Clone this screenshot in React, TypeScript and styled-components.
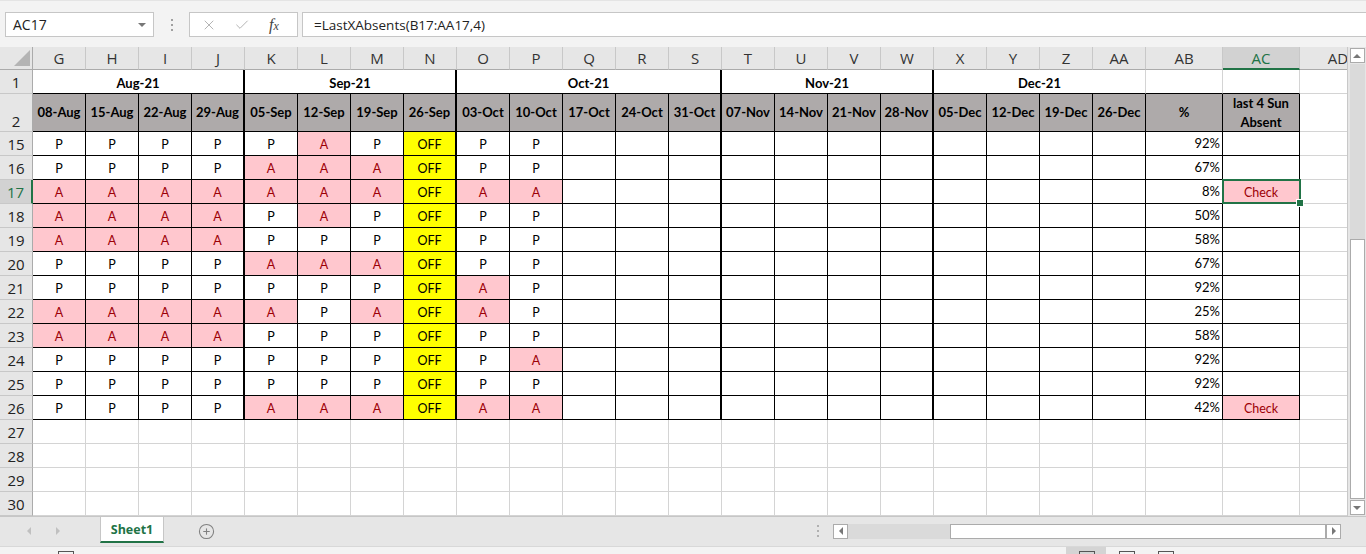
import React from "react";
import styled, { createGlobalStyle } from "styled-components";
import { X, Check, CirclePlus } from "lucide-react";

const GlobalStyle = createGlobalStyle`
  html, body {
    margin: 0;
    padding: 0;
    background: #ffffff;
  }
  body {
    width: 1366px;
    height: 554px;
    overflow: hidden;
  }
`;

const UI_FONT = `"Open Sans", "Noto Sans", Arial, sans-serif`;
const CELL_FONT = `Lato, "Liberation Sans", Arial, sans-serif`;

const GRID = "#d4d4d4";
const INK = "#000000";
const GREEN = "#217346";
const PINK = "#ffc7ce";
const DARK_RED = "#9c0006";
const HEAD_GREY = "#aeaaaa";

const COLS = [
  "G", "H", "I", "J", "K", "L", "M", "N", "O", "P", "Q", "R", "S",
  "T", "U", "V", "W", "X", "Y", "Z", "AA", "AB", "AC", "AD",
];
const WIDTHS = COLS.map((_, i) => (i >= 21 ? 77 : 53));
const THICK = new Set([3, 7, 12, 16]);

const MONTHS = [
  { label: "Aug-21", span: 4, thick: true },
  { label: "Sep-21", span: 4, thick: true },
  { label: "Oct-21", span: 5, thick: true },
  { label: "Nov-21", span: 4, thick: true },
  { label: "Dec-21", span: 4, thick: false },
];

const DATES = [
  "08-Aug", "15-Aug", "22-Aug", "29-Aug",
  "05-Sep", "12-Sep", "19-Sep", "26-Sep",
  "03-Oct", "10-Oct", "17-Oct", "24-Oct", "31-Oct",
  "07-Nov", "14-Nov", "21-Nov", "28-Nov",
  "05-Dec", "12-Dec", "19-Dec", "26-Dec",
];

// O = OFF
const ROWS = [
  { n: 15, v: "PPPPPAPOPP", pct: "92%", check: false },
  { n: 16, v: "PPPPAAAOPP", pct: "67%", check: false },
  { n: 17, v: "AAAAAAAOAA", pct: "8%", check: true },
  { n: 18, v: "AAAAPAPOPP", pct: "50%", check: false },
  { n: 19, v: "AAAAPPPOPP", pct: "58%", check: false },
  { n: 20, v: "PPPPAAAOPP", pct: "67%", check: false },
  { n: 21, v: "PPPPPPPOAP", pct: "92%", check: false },
  { n: 22, v: "AAAAAPAOAP", pct: "25%", check: false },
  { n: 23, v: "AAAAPPPOPP", pct: "58%", check: false },
  { n: 24, v: "PPPPPPPOPA", pct: "92%", check: false },
  { n: 25, v: "PPPPPPPOPP", pct: "92%", check: false },
  { n: 26, v: "PPPPAAAOAA", pct: "42%", check: true },
];

const Page = styled.div`
  width: 1366px;
  height: 554px;
  overflow: hidden;
  display: flex;
  flex-direction: column;
  background: #f3f3f3;
  font-family: ${UI_FONT};
`;

const TopBar = styled.div`
  height: 47px;
  box-sizing: border-box;
  padding: 11px 0 0 5px;
  display: flex;
  align-items: flex-start;
  background: #f3f3f3;
  border-top: 1px solid #e4e4e4;
`;

const NameBox = styled.div`
  width: 149px;
  height: 25px;
  box-sizing: border-box;
  background: #fff;
  border: 1px solid #c6c6c6;
  display: flex;
  align-items: center;
  justify-content: space-between;
  padding: 0 7px 0 7px;
  font-size: 14px;
  color: #222;
`;

const Caret = styled.span`
  width: 0;
  height: 0;
  border-left: 4px solid transparent;
  border-right: 4px solid transparent;
  border-top: 4px solid #777;
`;

const Dots = styled.div`
  width: 35px;
  height: 25px;
  display: flex;
  flex-direction: column;
  align-items: center;
  justify-content: center;
  gap: 3px;

  span {
    width: 2px;
    height: 2px;
    background: #a0a0a0;
  }
`;

const FxBox = styled.div`
  width: 109px;
  height: 25px;
  box-sizing: border-box;
  background: #fff;
  border: 1px solid #c6c6c6;
  display: flex;
  align-items: center;
  padding-left: 11px;
  gap: 17px;
  color: #b4b4b4;
`;

const FxLabel = styled.span`
  font-family: "Liberation Serif", "DejaVu Serif", serif;
  font-style: italic;
  font-size: 16px;
  color: #444;
  margin-left: 2px;

  small {
    font-size: 12px;
  }
`;

const FormulaBox = styled.div`
  flex: 1;
  height: 25px;
  box-sizing: border-box;
  margin-left: 4px;
  background: #fff;
  border: 1px solid #c6c6c6;
  border-right: none;
  display: flex;
  align-items: center;
  padding-left: 11px;
  font-size: 13.5px;
  color: #222;
`;

const SheetRegion = styled.div`
  height: 469px;
  display: flex;
  background: #fff;
`;

const Viewport = styled.div`
  width: 1347px;
  height: 469px;
  overflow: hidden;
  position: relative;
`;

const Sheet = styled.div`
  display: grid;
  grid-template-columns: 33px ${WIDTHS.map((w) => `${w}px`).join(" ")};
  grid-template-rows: 23px 24px 38px repeat(16, 24px);
`;

const Corner = styled.div`
  box-sizing: border-box;
  background: #e6e6e6;
  border-right: 1px solid #ababab;
  border-bottom: 1px solid #ababab;
  display: flex;
  align-items: flex-end;
  justify-content: flex-end;
  padding: 0 2px 3px 0;
`;

const ColHead = styled.div<{ $active?: boolean }>`
  box-sizing: border-box;
  background: ${(p) => (p.$active ? "#d2d2d2" : "#e6e6e6")};
  color: ${(p) => (p.$active ? GREEN : "#333")};
  border-right: 1px solid #c8c8c8;
  border-bottom: ${(p) => (p.$active ? `2px solid ${GREEN}` : "1px solid #ababab")};
  display: flex;
  align-items: center;
  justify-content: center;
  font-size: 15px;
  white-space: nowrap;
  overflow: hidden;
`;

const RowHead = styled.div<{ $active?: boolean; $bottom?: boolean }>`
  box-sizing: border-box;
  background: ${(p) => (p.$active ? "#d2d2d2" : "#e6e6e6")};
  color: ${(p) => (p.$active ? GREEN : "#222")};
  border-right: ${(p) => (p.$active ? `2px solid ${GREEN}` : "1px solid #ababab")};
  border-bottom: 1px solid #c8c8c8;
  display: flex;
  align-items: ${(p) => (p.$bottom ? "flex-end" : "center")};
  justify-content: center;
  padding-top: ${(p) => (p.$bottom ? "0" : "1px")};
  font-size: 15px;
`;

const Cell = styled.div<{
  $bg?: string;
  $fg?: string;
  $bold?: boolean;
  $align?: "center" | "right";
  $valign?: "center" | "bottom";
  $r?: string;
  $rw?: number;
  $b?: string;
  $span?: number;
  $size?: number;
  $wrap?: boolean;
}>`
  box-sizing: border-box;
  position: relative;
  display: flex;
  align-items: ${(p) => (p.$valign === "bottom" ? "flex-end" : "center")};
  justify-content: ${(p) => (p.$align === "right" ? "flex-end" : "center")};
  padding: ${(p) => (p.$valign === "bottom" ? "0 2px 1px" : "1px 2px 0")};
  background: ${(p) => p.$bg ?? "#fff"};
  color: ${(p) => p.$fg ?? "#000"};
  font-family: ${CELL_FONT};
  font-size: ${(p) => p.$size ?? 12.5}px;
  font-weight: ${(p) => (p.$bold ? 700 : 400)};
  border-right: ${(p) => p.$rw ?? 1}px solid ${(p) => p.$r ?? GRID};
  border-bottom: 1px solid ${(p) => p.$b ?? GRID};
  grid-column: ${(p) => (p.$span ? `span ${p.$span}` : "auto")};
  white-space: ${(p) => (p.$wrap ? "normal" : "nowrap")};
  text-align: center;
  line-height: ${(p) => (p.$wrap ? "19px" : "1.2")};
`;

const Selection = styled.div`
  position: absolute;
  left: -1px;
  top: -1px;
  right: -2px;
  bottom: -1px;
  border: 2px solid ${GREEN};
  z-index: 3;
  pointer-events: none;
`;

const FillHandle = styled.div`
  position: absolute;
  right: -5px;
  bottom: -5px;
  width: 6px;
  height: 6px;
  background: ${GREEN};
  border: 1px solid #fff;
`;

const VScroll = styled.div`
  width: 19px;
  box-sizing: border-box;
  background: #e6e6e6;
  border-left: 1px solid #c8c8c8;
  display: flex;
  flex-direction: column;
  align-items: center;
  padding: 1px 0 1px 0;
`;

const ArrowBtn = styled.div<{ $dir: "up" | "down" | "left" | "right" }>`
  width: 15px;
  height: 15px;
  box-sizing: border-box;
  background: #fff;
  border: 1px solid #ababab;
  display: flex;
  align-items: center;
  justify-content: center;
  flex-shrink: 0;

  &::after {
    content: "";
    width: 0;
    height: 0;
    ${(p) =>
      p.$dir === "up"
        ? "border-left: 4px solid transparent; border-right: 4px solid transparent; border-bottom: 4px solid #777;"
        : p.$dir === "down"
        ? "border-left: 4px solid transparent; border-right: 4px solid transparent; border-top: 4px solid #777;"
        : p.$dir === "left"
        ? "border-top: 4px solid transparent; border-bottom: 4px solid transparent; border-right: 4px solid #777;"
        : "border-top: 4px solid transparent; border-bottom: 4px solid transparent; border-left: 4px solid #777;"}
  }
`;

const VTrack = styled.div`
  flex: 1;
  width: 15px;
  display: flex;
  flex-direction: column;
  background: #dadada;
  margin: 1px 0;
`;

const VThumb = styled.div`
  margin-top: 175px;
  flex: 1;
  background: #fff;
  border: 1px solid #ababab;
`;

const TabBar = styled.div`
  height: 30px;
  box-sizing: border-box;
  border-top: 1px solid #c6c6c6;
  background: #e6e6e6;
  display: flex;
  align-items: flex-start;
  padding-right: 25px;
`;

const NavArrows = styled.div`
  width: 100px;
  height: 28px;
  display: flex;
  align-items: center;
  padding-left: 27px;
  box-sizing: border-box;
  gap: 25px;
`;

const NavArrow = styled.span<{ $dir: "left" | "right" }>`
  width: 0;
  height: 0;
  border-top: 4px solid transparent;
  border-bottom: 4px solid transparent;
  ${(p) =>
    p.$dir === "left"
      ? "border-right: 4px solid #c0c0c0;"
      : "border-left: 4px solid #c0c0c0;"}
`;

const SheetTab = styled.div`
  width: 64px;
  height: 26px;
  box-sizing: border-box;
  background: #fff;
  border-left: 1px solid #c6c6c6;
  border-right: 1px solid #c6c6c6;
  border-bottom: 2px solid ${GREEN};
  display: flex;
  align-items: center;
  justify-content: center;
  font-weight: 700;
  font-size: 12.5px;
  color: ${GREEN};
`;

const AddSheet = styled.div`
  margin-left: 34px;
  height: 28px;
  display: flex;
  align-items: center;
  color: #808080;
`;

const HScrollArea = styled.div`
  margin-left: auto;
  display: flex;
  align-items: center;
  height: 28px;
`;

const HDots = styled.div`
  display: flex;
  flex-direction: column;
  gap: 3px;
  margin-right: 14px;

  span {
    width: 2px;
    height: 2px;
    background: #b0b0b0;
  }
`;

const HTrack = styled.div`
  width: 478px;
  height: 15px;
  background: #dadada;
  display: flex;
`;

const HThumb = styled.div`
  margin-left: 102px;
  flex: 1;
  box-sizing: border-box;
  background: #fff;
  border: 1px solid #ababab;
`;

const StatusBar = styled.div`
  flex: 1;
  background: #f3f3f3;
  border-top: 1px solid #d8d8d8;
  position: relative;
`;

const StatusIcon = styled.div<{ $x: number }>`
  position: absolute;
  left: ${(p) => p.$x}px;
  top: 4px;
  width: 14px;
  height: 10px;
  border: 1px solid #555;
  border-bottom: none;
`;

const ViewActive = styled.div`
  position: absolute;
  left: 1066px;
  top: 0;
  width: 40px;
  height: 100%;
  background: #d4d4d4;
`;

const CornerTriangle = () => (
  <svg width="16" height="16" viewBox="0 0 16 16">
    <polygon points="16,0 16,16 0,16" fill="#b4b4b4" />
  </svg>
);

export default function App() {
  const cells: React.ReactNode[] = [];

  // column header row
  cells.push(
    <Corner key="corner">
      <CornerTriangle />
    </Corner>
  );
  COLS.forEach((c) =>
    cells.push(
      <ColHead key={`h-${c}`} $active={c === "AC"}>
        {c}
      </ColHead>
    )
  );

  // row 1 - months
  cells.push(<RowHead key="rh-1">1</RowHead>);
  MONTHS.forEach((m) =>
    cells.push(
      <Cell
        key={m.label}
        $span={m.span}
        $bold
        $size={13}
        $valign="bottom"
        $r={m.thick ? INK : GRID}
        $rw={m.thick ? 2 : 1}
        $b={INK}
      >
        {m.label}
      </Cell>
    )
  );
  cells.push(<Cell key="r1-ab" $b={INK} />);
  cells.push(<Cell key="r1-ac" $b={INK} />);
  cells.push(<Cell key="r1-ad" />);

  // row 2 - dates
  cells.push(
    <RowHead key="rh-2" $bottom>
      2
    </RowHead>
  );
  DATES.forEach((d, i) =>
    cells.push(
      <Cell
        key={d}
        $bg={HEAD_GREY}
        $bold
        $size={13}
        $r={INK}
        $rw={THICK.has(i) ? 2 : 1}
        $b={INK}
      >
        {d}
      </Cell>
    )
  );
  cells.push(
    <Cell key="r2-ab" $bg={HEAD_GREY} $bold $size={13} $r={INK} $b={INK}>
      %
    </Cell>
  );
  cells.push(
    <Cell key="r2-ac" $bg={HEAD_GREY} $bold $size={13} $r={INK} $b={INK} $wrap>
      last 4 Sun Absent
    </Cell>
  );
  cells.push(<Cell key="r2-ad" />);

  // data rows
  ROWS.forEach((row) => {
    const active = row.n === 17;
    cells.push(
      <RowHead key={`rh-${row.n}`} $active={active}>
        {row.n}
      </RowHead>
    );
    COLS.forEach((c, i) => {
      const key = `${c}${row.n}`;
      if (i === 23) {
        cells.push(<Cell key={key} />);
        return;
      }
      const base = { $r: INK, $rw: THICK.has(i) ? 2 : 1, $b: INK };
      if (i < 10) {
        const v = row.v[i];
        if (v === "O") {
          cells.push(
            <Cell key={key} {...base} $bg="#ffff00">
              OFF
            </Cell>
          );
        } else if (v === "A") {
          cells.push(
            <Cell key={key} {...base} $bg={PINK} $fg={DARK_RED}>
              A
            </Cell>
          );
        } else {
          cells.push(
            <Cell key={key} {...base}>
              P
            </Cell>
          );
        }
      } else if (i === 21) {
        cells.push(
          <Cell key={key} {...base} $align="right" $size={13}>
            {row.pct}
          </Cell>
        );
      } else if (i === 22) {
        cells.push(
          <Cell
            key={key}
            {...base}
            $bg={row.check ? PINK : "#fff"}
            $fg={DARK_RED}
          >
            {row.check ? "Check" : ""}
            {active && (
              <Selection>
                <FillHandle />
              </Selection>
            )}
          </Cell>
        );
      } else {
        cells.push(<Cell key={key} {...base} />);
      }
    });
  });

  // empty rows
  [27, 28, 29, 30].forEach((n) => {
    cells.push(<RowHead key={`rh-${n}`}>{n}</RowHead>);
    COLS.forEach((c) => cells.push(<Cell key={`${c}${n}`} />));
  });

  return (
    <Page>
      <GlobalStyle />
      <TopBar>
        <NameBox>
          AC17
          <Caret />
        </NameBox>
        <Dots>
          <span />
          <span />
          <span />
        </Dots>
        <FxBox>
          <X size={16} strokeWidth={1.5} />
          <Check size={16} strokeWidth={1.5} />
          <FxLabel>
            f<small>x</small>
          </FxLabel>
        </FxBox>
        <FormulaBox>=LastXAbsents(B17:AA17,4)</FormulaBox>
      </TopBar>

      <SheetRegion>
        <Viewport>
          <Sheet>{cells}</Sheet>
        </Viewport>
        <VScroll>
          <ArrowBtn $dir="up" />
          <VTrack>
            <VThumb />
          </VTrack>
          <ArrowBtn $dir="down" />
        </VScroll>
      </SheetRegion>

      <TabBar>
        <NavArrows>
          <NavArrow $dir="left" />
          <NavArrow $dir="right" />
        </NavArrows>
        <SheetTab>Sheet1</SheetTab>
        <AddSheet>
          <CirclePlus size={17} strokeWidth={1.5} />
        </AddSheet>
        <HScrollArea>
          <HDots>
            <span />
            <span />
            <span />
          </HDots>
          <ArrowBtn $dir="left" />
          <HTrack>
            <HThumb />
          </HTrack>
          <ArrowBtn $dir="right" />
        </HScrollArea>
      </TabBar>

      <StatusBar>
        <StatusIcon $x={58} />
        <ViewActive />
        <StatusIcon $x={1079} />
        <StatusIcon $x={1119} />
        <StatusIcon $x={1158} />
      </StatusBar>
    </Page>
  );
}
